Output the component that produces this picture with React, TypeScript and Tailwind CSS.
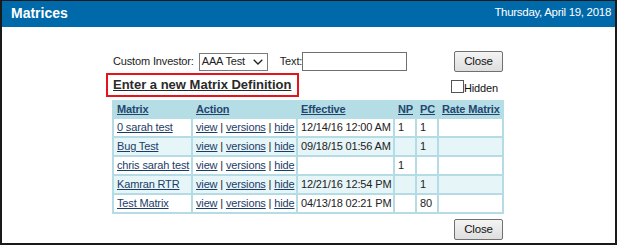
const rows = [
  { name: "0 sarah test", eff: "12/14/16 12:00 AM", np: "1", pc: "1" },
  { name: "Bug Test", eff: "09/18/15 01:56 AM", np: "", pc: "1" },
  { name: "chris sarah test", eff: "", np: "1", pc: "" },
  { name: "Kamran RTR", eff: "12/21/16 12:54 PM", np: "", pc: "1" },
  { name: "Test Matrix", eff: "04/13/18 02:21 PM", np: "", pc: "80" },
];

const cols = "grid grid-cols-[79px_105px_97px_22px_22px_65px]";

const CloseButton = () => (
  <button className="w-[49px] h-[21px] rounded-[2px] border border-[#707070] bg-gradient-to-b from-[#f4f4f4] to-[#dedede] text-[11.5px] text-[#111] leading-none">
    Close
  </button>
);

export default function App() {
  return (
    <div className="w-[617px] h-[245px] bg-white border-t border-l-2 border-r-2 border-b-2 border-[#1a1a1a] font-['Liberation_Sans',Arial,sans-serif] text-[#222] overflow-hidden">
      <div className="h-[26px] bg-[#0069aa] flex items-center justify-between pl-[9px] pr-[4px] pb-[2px] text-white">
        <span className="text-[14px] font-bold">Matrices</span>
        <span className="text-[11.5px] tracking-[-0.3px]">Thursday, April 19, 2018</span>
      </div>

      <div className="ml-[110px] w-[392px] pt-[24px] text-[11px] tracking-[-0.15px]">
        <div className="flex items-center h-[21px]">
          <span className="ml-[1px]">Custom Investor:</span>
          <div className="ml-[5px] w-[69px] h-[18px] border border-[#7a7a7a] flex items-center justify-between pl-[2px] pr-[4px]">
            <span>AAA Test</span>
            <svg width="10" height="6" viewBox="0 0 10 6" className="text-[#222]">
              <path d="M0.7 0.7 L5 5 L9.3 0.7" fill="none" stroke="currentColor" strokeWidth="1.3" />
            </svg>
          </div>
          <span className="ml-[12px]">Text:</span>
          <div className="w-[105px] h-[19px] border border-[#6f6f6f] bg-white" />
          <div className="ml-auto mr-[1px]">
            <CloseButton />
          </div>
        </div>

        <div className="mt-[1px] flex justify-between">
          <div className="-ml-[6px] h-[24px] border-2 border-[#e3141c] pl-[5px] pr-[6px] flex items-center">
            <a className="text-[13px] font-bold text-[#2a2a2a] underline tracking-normal">
              Enter a new Matrix Definition
            </a>
          </div>
          <div className="mt-[7px] mr-[6px] flex items-start">
            <div className="w-[13px] h-[13px] border border-[#555] bg-white" />
            <span className="pt-[3px] leading-[11px] text-[#111]">Hidden</span>
          </div>
        </div>

        <div className="mt-[3px] border-l-2 border-[#b5dce5]">
          <div className={`${cols} h-[19px] bg-[#b5dde6] font-bold text-[#24466e]`}>
            {["Matrix", "Action", "Effective", "NP", "PC", "Rate Matrix"].map((h) => (
              <div key={h} className="pl-[3px] flex items-center underline">
                {h}
              </div>
            ))}
          </div>
          {rows.map((r, i) => (
            <div key={r.name} className={`${cols} h-[19px] ${i % 2 === 1 ? "bg-[#e6f5f7]" : "bg-white"}`}>
              <div className="pl-[3px] flex items-center border-r-2 border-b-2 border-[#b5dce5] whitespace-nowrap">
                <a className="underline text-[#1c3c68]">{r.name}</a>
              </div>
              <div className="pl-[3px] flex items-center border-r-2 border-b-2 border-[#b5dce5] whitespace-nowrap">
                <a className="underline text-[#1c3c68]">view</a>
                <span className="whitespace-pre"> | </span>
                <a className="underline text-[#1c3c68]">versions</a>
                <span className="whitespace-pre"> | </span>
                <a className="underline text-[#1c3c68]">hide</a>
              </div>
              <div className="pl-[3px] flex items-center border-r-2 border-b-2 border-[#b5dce5] whitespace-nowrap">
                {r.eff}
              </div>
              <div className="pl-[3px] flex items-center border-r-2 border-b-2 border-[#b5dce5]">{r.np}</div>
              <div className="pl-[3px] flex items-center border-r-2 border-b-2 border-[#b5dce5]">{r.pc}</div>
              <div className="border-r-2 border-b-2 border-[#b5dce5]" />
            </div>
          ))}
        </div>

        <div className="mt-[5px] flex justify-end mr-[1px]">
          <CloseButton />
        </div>
      </div>
    </div>
  );
}
